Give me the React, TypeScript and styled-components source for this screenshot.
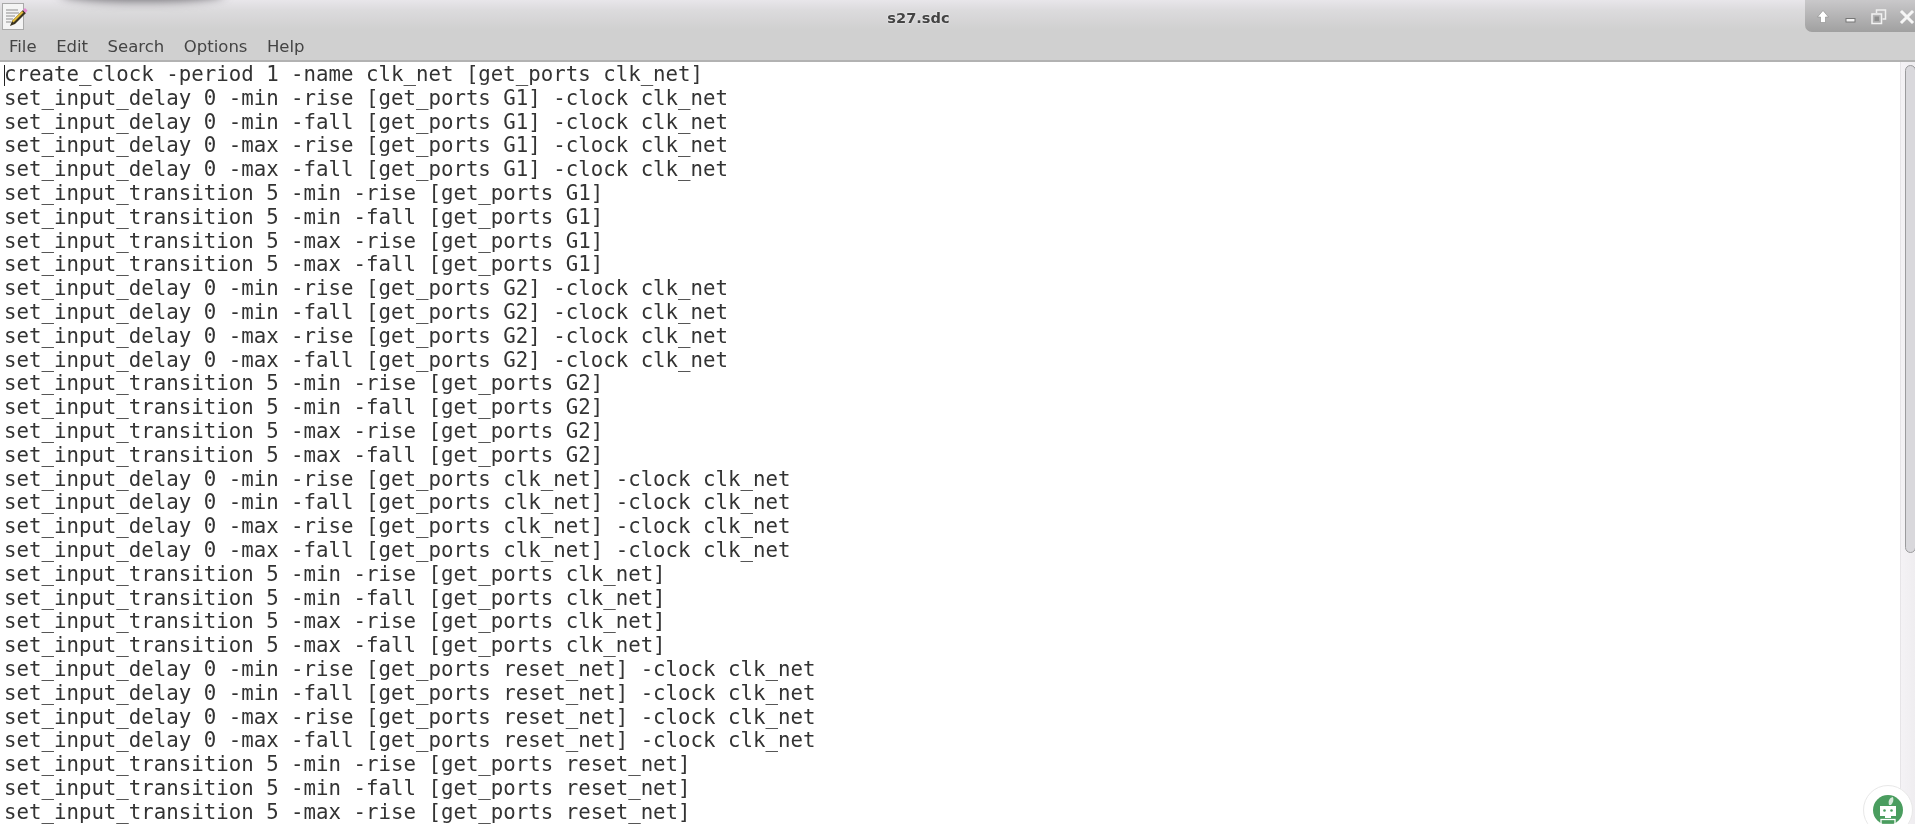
import React from "react";
import styled, { createGlobalStyle } from "styled-components";

const GlobalStyle = createGlobalStyle`
  html, body {
    margin: 0;
    height: 100%;
    overflow: hidden;
    background: #ffffff;
  }
`;

const Window = styled.div`
  position: relative;
  width: 1915px;
  height: 824px;
  display: flex;
  flex-direction: column;
  overflow: hidden;
  font-family: "DejaVu Sans", sans-serif;
  filter: blur(0.4px);
`;

const TitleBar = styled.header`
  position: relative;
  height: 30px;
  flex: none;
  box-sizing: border-box;
  padding-right: 78px;
  display: flex;
  align-items: flex-start;
  justify-content: center;
  background: linear-gradient(#e8e6ea 0, #dcdbdd 10px, #d0d0d0 30px);
`;

// dark blur left over from the window above, top left
const TopSmudge = styled.div`
  position: absolute;
  left: 60px;
  top: -14px;
  width: 165px;
  height: 16px;
  border-radius: 50%;
  background: #77757a;
  filter: blur(5px);
`;

const AppIcon = styled.svg`
  position: absolute;
  left: 1px;
  top: 3px;
  width: 27px;
  height: 27px;
`;

const Title = styled.h1`
  margin: 9px 0 0;
  font-size: 14.6px;
  line-height: 18px;
  font-weight: 700;
  color: #444444;
  text-shadow: 0 0 2px #ffffff;
`;

const Controls = styled.div`
  position: absolute;
  right: 0;
  top: 0;
  width: 110px;
  height: 32px;
  box-sizing: border-box;
  padding: 9px 0 0 10px;
  display: flex;
  gap: 12px;
  align-items: flex-start;
  border-bottom-left-radius: 7px;
  background: linear-gradient(#c9c8ca, #a0a0a0);
`;

const ControlIcon = styled.svg`
  width: 16px;
  height: 16px;
  flex: none;
`;

const MenuBar = styled.nav`
  height: 32px;
  flex: none;
  box-sizing: border-box;
  padding: 3px 0 0 9px;
  display: flex;
  gap: 19.5px;
  align-items: center;
  background: #d0d0d0;
  border-bottom: 2px solid #b2b2b2;
`;

const MenuItem = styled.span`
  font-size: 16.5px;
  color: #444444;
`;

const Body = styled.main`
  flex: 1;
  min-height: 0;
  display: flex;
  background: #ffffff;
`;

const Editor = styled.div`
  position: relative;
  flex: 1;
  min-width: 0;
  overflow: hidden;
  padding: 1px 0 0 4px;
`;

const Caret = styled.div`
  position: absolute;
  left: 4px;
  top: 3px;
  width: 1px;
  height: 21px;
  background: #222222;
`;

const Line = styled.div`
  height: 23.8px;
  line-height: 23.8px;
  font-family: "DejaVu Sans Mono", monospace;
  font-size: 20.74px;
  white-space: pre;
  color: #333333;
`;

const Track = styled.aside`
  width: 15px;
  flex: none;
  box-sizing: border-box;
  padding: 3px 0 0 4px;
  background: linear-gradient(90deg, #f4f2f5, #efedf0);
  border-left: 1px solid #e6e4e7;
`;

const Thumb = styled.div`
  width: 11px;
  height: 488px;
  box-sizing: border-box;
  border: 1px solid #9b9b9d;
  border-radius: 6px;
  background: #d9d8dc;
`;

const BotBadge = styled.div`
  position: absolute;
  right: 2px;
  bottom: -11px;
  width: 50px;
  height: 50px;
  box-sizing: border-box;
  border-radius: 50%;
  background: #ffffff;
  border: 1px solid #e8e8e8;
  display: flex;
  align-items: center;
  justify-content: center;
`;

const BotIcon = styled.svg`
  width: 32px;
  height: 32px;
`;

const range = ["-min -rise", "-min -fall", "-max -rise", "-max -fall"];

// every port gets the same eight constraints
const portLines = (port: string) => [
  ...range.map((r) => `set_input_delay 0 ${r} [get_ports ${port}] -clock clk_net`),
  ...range.map((r) => `set_input_transition 5 ${r} [get_ports ${port}]`),
];

const lines = [
  "create_clock -period 1 -name clk_net [get_ports clk_net]",
  ...portLines("G1"),
  ...portLines("G2"),
  ...portLines("clk_net"),
  ...portLines("reset_net"),
].slice(0, 32);

const menus = ["File", "Edit", "Search", "Options", "Help"];

const App: React.FC = () => (
  <Window>
    <GlobalStyle />
    <TitleBar>
      <TopSmudge />
      <AppIcon viewBox="0 0 27 27">
        <rect x="1.5" y="0.5" width="21" height="26" fill="#f4f4f4" stroke="#a9a9a9" />
        <path d="M5 7h12M5 10h13M5 13h9M5 16h7M5 19h5" stroke="#8d8d8d" strokeWidth="1" />
        <path d="M9 23l2-5 11-11 3 3-11 11z" fill="#3a3320" />
        <path d="M11 18l10-10 1.500 1.500-10 10z" fill="#e0b93a" />
        <path d="M22 7l2-2 2.500 2.500-2 2.500z" fill="#e58ad0" />
      </AppIcon>
      <Title>s27.sdc</Title>
      <Controls>
        <ControlIcon viewBox="0 0 16 16">
          <path d="M8 1.500l5.500 6.500H10.500v5.500h-5V8H2.500z" fill="#ffffff" stroke="#8a8a8a" strokeWidth="0.6" />
        </ControlIcon>
        <ControlIcon viewBox="0 0 16 16">
          <rect x="3" y="9.500" width="9" height="3.500" fill="#f4f4f4" stroke="#777777" strokeWidth="1" />
        </ControlIcon>
        <ControlIcon viewBox="0 0 16 16">
          <path d="M5.500 4V1h9v9H11.500" fill="none" stroke="#efefef" strokeWidth="1.500" />
          <rect x="1" y="5" width="9.500" height="9.500" fill="none" stroke="#f2f2f2" strokeWidth="1.500" />
          <rect x="3.500" y="7.500" width="4.500" height="4.500" fill="#8e8e8e" />
        </ControlIcon>
        <ControlIcon viewBox="0 0 16 16">
          <path d="M3 3l10 10M13 3L3 13" stroke="#f6f6f6" strokeWidth="3" strokeLinecap="square" />
        </ControlIcon>
      </Controls>
    </TitleBar>
    <MenuBar>
      {menus.map((m) => (
        <MenuItem key={m}>{m}</MenuItem>
      ))}
    </MenuBar>
    <Body>
      <Editor>
        <Caret />
        {lines.map((l, i) => (
          <Line key={i}>{l}</Line>
        ))}
      </Editor>
      <Track>
        <Thumb />
      </Track>
    </Body>
    <BotBadge>
      <BotIcon viewBox="0 0 32 32">
        <circle cx="16" cy="16" r="15" fill="#4a9d5f" />
        <path d="M17 11c-1-4 0-7 4-8 1 3 0 6-2 8z" fill="#d5e8da" />
        <rect x="8" y="12" width="16" height="10" fill="#ffffff" />
        <circle cx="12.500" cy="16.500" r="1.300" fill="#4a9d5f" />
        <circle cx="19.500" cy="16.500" r="1.300" fill="#4a9d5f" />
        <rect x="13" y="22" width="6" height="2" fill="#ffffff" />
        <rect x="9" y="25.500" width="14" height="5" fill="none" stroke="#ffffff" strokeWidth="1.300" />
      </BotIcon>
    </BotBadge>
  </Window>
);

export default App;
